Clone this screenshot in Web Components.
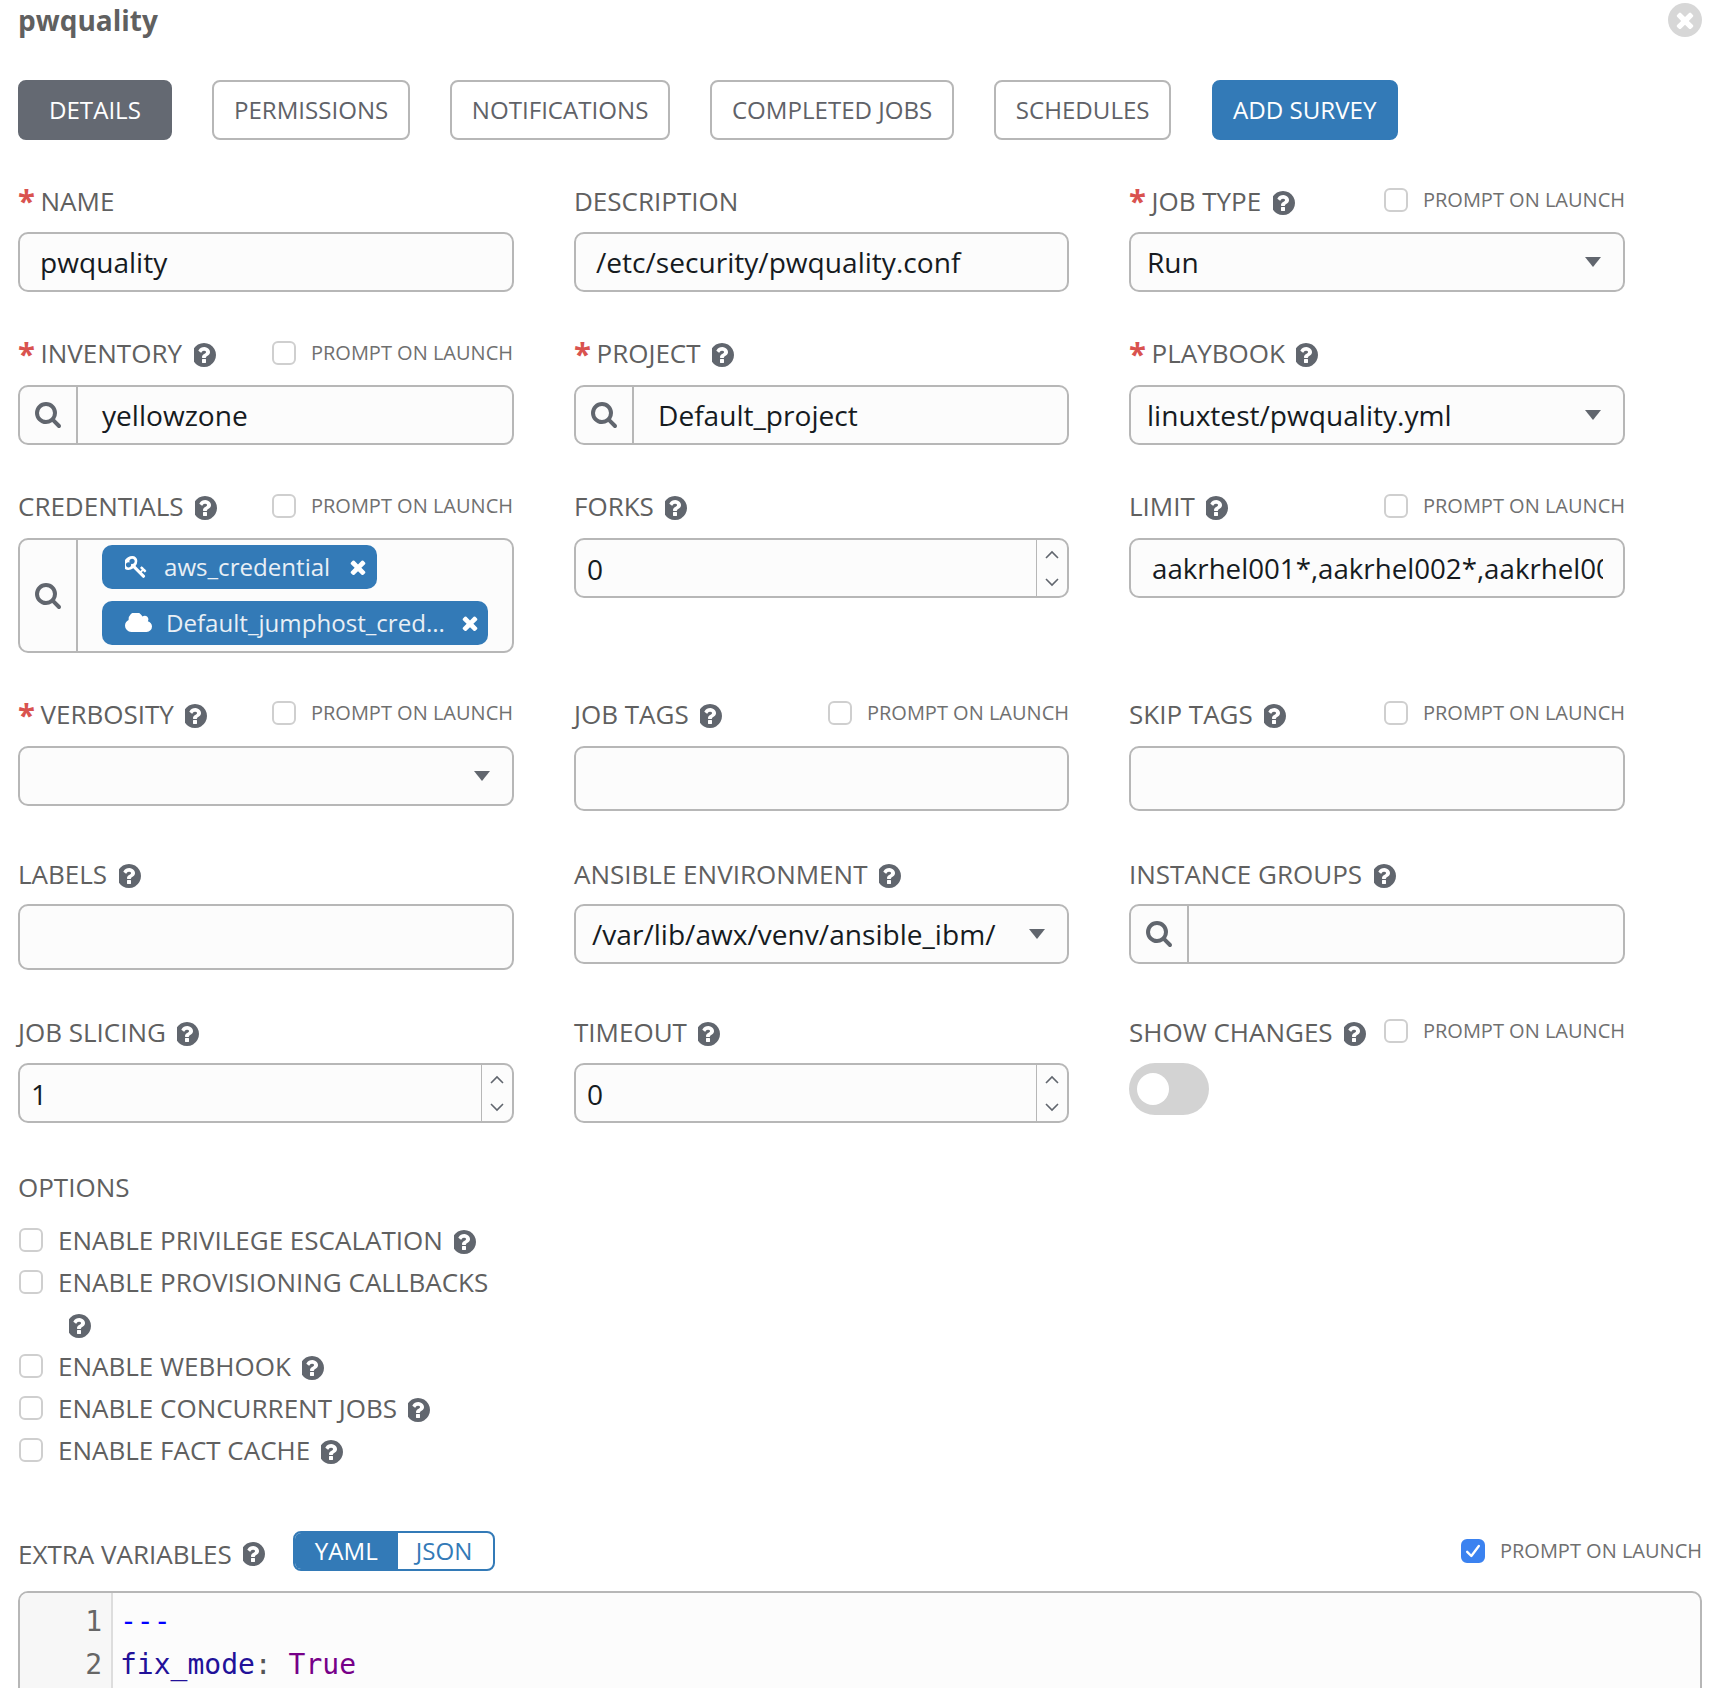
<!DOCTYPE html>
<html>
<head>
<meta charset="utf-8">
<title>pwquality</title>
<style>
    html, body {
      margin: 0;
      height: 1688px;
      overflow: hidden;
      background: #fff;
      font-family: "Open Sans", sans-serif;
    }
</style>
</head>
<body>
<template-page>
    <x-close></x-close>
    <x-title>pwquality</x-title>
    <x-tabs>
        <x-tab active style="--pad:29px">DETAILS</x-tab>
        <x-tab>PERMISSIONS</x-tab>
        <x-tab>NOTIFICATIONS</x-tab>
        <x-tab>COMPLETED JOBS</x-tab>
        <x-tab>SCHEDULES</x-tab>
        <x-tab primary>ADD SURVEY</x-tab>
    </x-tabs>
    <x-form>
        <x-field required label="NAME"><x-input>pwquality</x-input></x-field>
        <x-field label="DESCRIPTION"><x-input>/etc/security/pwquality.conf</x-input></x-field>
        <x-field required help prompt label="JOB TYPE"><x-select>Run</x-select></x-field>

        <x-field required help prompt label="INVENTORY" style="--lh:36px;--pr:1px"><x-lookup>yellowzone</x-lookup></x-field>
        <x-field required help label="PROJECT" style="--lh:36px"><x-lookup>Default_project</x-lookup></x-field>
        <x-field required help label="PLAYBOOK" style="--lh:36px"><x-select>linuxtest/pwquality.yml</x-select></x-field>

        <x-field help prompt label="CREDENTIALS" style="--lh:36px;--ph:35px;--pr:1px">
            <x-lookup tall>
                <x-tag icon="key" style="--gap:17px;--mid:20px;--end:11px">aws_credential</x-tag>
                <x-tag icon="cloud" style="--gap:14px;--mid:17px;--end:10px">Default_jumphost_cred...</x-tag>
            </x-lookup>
        </x-field>
        <x-field help label="FORKS" style="--lh:36px"><x-number>0</x-number></x-field>
        <x-field help prompt label="LIMIT" style="--lh:36px;--ph:35px"><x-input style="--pl:21px;--fs:27.7px">aakrhel001*,aakrhel002*,aakrhel003*</x-input></x-field>

        <x-field required help prompt label="VERBOSITY" style="--lh:36px;--ph:34px;--pr:1px"><x-select></x-select></x-field>
        <x-field help prompt label="JOB TAGS" style="--lh:36px;--ph:34px"><x-input style="--h:65px"></x-input></x-field>
        <x-field help prompt label="SKIP TAGS" style="--lh:36px;--ph:34px"><x-input style="--h:65px"></x-input></x-field>

        <x-field help label="LABELS" style="--lh:40px"><x-input style="--h:66px"></x-input></x-field>
        <x-field help label="ANSIBLE ENVIRONMENT" style="--lh:40px"><x-select>/var/lib/awx/venv/ansible_ibm/</x-select></x-field>
        <x-field help label="INSTANCE GROUPS" style="--lh:40px"><x-lookup></x-lookup></x-field>

        <x-field help label="JOB SLICING"><x-number>1</x-number></x-field>
        <x-field help label="TIMEOUT"><x-number>0</x-number></x-field>
        <x-field help prompt label="SHOW CHANGES" style="--ph:35px"><x-switch></x-switch></x-field>
    </x-form>
    <x-options>
        <x-option>ENABLE PRIVILEGE ESCALATION</x-option>
        <x-option>ENABLE PROVISIONING CALLBACKS</x-option>
        <x-option>ENABLE WEBHOOK</x-option>
        <x-option>ENABLE CONCURRENT JOBS</x-option>
        <x-option>ENABLE FACT CACHE</x-option>
    </x-options>
    <x-extra-vars></x-extra-vars>
</template-page>

<script>
const FONT = `"Open Sans", sans-serif`;
const ICONS = {
    help: `<svg viewBox="128 128 1536 1536" width="24" height="24" fill="#61666e"><path d="M896 1376v-192q0-14-9-23t-23-9h-192q-14 0-23 9t-9 23v192q0 14 9 23t23 9h192q14 0 23-9t9-23zm256-672q0-88-55.5-163t-138.5-116-170-41q-243 0-371 213-15 24 8 42l132 100q7 6 19 6 16 0 25-12 53-68 86-92 34-24 86-24 48 0 85.5 26t37.5 59q0 38-20 61t-68 45q-63 28-115.5 86.5t-52.5 125.5v36q0 14 9 23t23 9h192q14 0 23-9t9-23q0-19 21.5-49.5t54.5-49.5q32-18 49-28.5t46-35 44.5-48 28-60.5 12.5-81zm384 192q0 209-103 385.5t-279.5 279.5-385.5 103-385.5-103-279.5-279.5-103-385.5 103-385.5 279.5-279.5 385.5-103 385.5 103 279.5 279.5 103 385.5z"/></svg>`,
    search: `<svg viewBox="64 128 1664 1664" width="26" height="26" fill="#61666e"><path d="M1216 832q0-185-131.5-316.5t-316.5-131.5-316.5 131.5-131.5 316.5 131.5 316.5 316.5 131.5 316.5-131.5 131.5-316.5zm512 832q0 52-38 90t-90 38q-54 0-90-38l-343-342q-179 124-399 124-143 0-273.5-55.5t-225-150-150-225-55.5-273.5 55.5-273.5 150-225 225-150 273.5-55.5 273.5 55.5 225 150 150 225 55.5 273.5q0 220-124 399l343 343q37 37 37 90z"/></svg>`,
    times: `<svg viewBox="250 250 1290 1290" width="16" height="16" fill="#fff"><path d="M1490 1322q0 40-28 68l-136 136q-28 28-68 28t-68-28l-294-294-294 294q-28 28-68 28t-68-28l-136-136q-28-28-28-68t28-68l294-294-294-294q-28-28-28-68t28-68l136-136q28-28 68-28t68 28l294 294 294-294q28-28 68-28t68 28l136 136q28 28 28 68t-28 68l-294 294 294 294q28 28 28 68z"/></svg>`,
    key: `<svg viewBox="128 128 1600 1600" width="22" height="22" fill="#fff"><path d="M832 512q0-80-56-136t-136-56-136 56-56 136q0 42 19 83-41-19-83-19-80 0-136 56t-56 136 56 136 136 56 136-56 56-136q0-42-19-83 41 19 83 19 80 0 136-56t56-136zm851 704q0 17-49 66t-66 49q-9 0-28.5-16t-36.5-33-38.5-40-24.5-26l-96 96 220 220q28 28 28 68 0 42-39 81t-81 39q-40 0-68-28l-671-671q-176 131-365 131-163 0-265.5-102.5t-102.5-265.5q0-160 95-313t248-248 313-95q163 0 265.5 102.5t102.5 265.5q0 189-131 365l355 355 96-96q-2-2-26-24.5t-40-38.5-33-36.5-16-28.5q0-17 49-66t66-49q13 0 23 10 6 6 46 44.5t82 79.5 86.5 86 73 78 28.5 41z"/></svg>`,
    cloud: `<svg viewBox="0 256 1920 1344" width="27" height="19" fill="#fff"><path d="M1728 1216q0 159-112.5 271.5t-271.5 112.5h-1088q-185 0-316.5-131.5t-131.5-316.5q0-132 71-241.5t187-163.5q-2-28-2-43 0-212 150-362t362-150q158 0 286.5 88t187.5 230q70-62 166-62 106 0 181 75t75 181q0 75-41 138 129 30 213 134.5t84 239.5z" transform="translate(192 0)"/></svg>`
};

function defineElement(tag, html, extra) {
    let template = document.createElement('template');
    template.innerHTML = html;
    class Element extends HTMLElement {
        connectedCallback() {
            if (this.shadowRoot) return;
            this.attachShadow({mode: "open"});
            this.shadowRoot.appendChild(template.content.cloneNode(true));
            if (extra) extra(this, this.shadowRoot);
        }
    }
    window.customElements.define(tag, Element);
}

defineElement('template-page', `
    <style>
    :host { display: block; position: relative; padding: 0 8px 0 18px; width: 1684px; color: #606060; font-family: ${FONT}; }
    </style>
    <slot></slot>
`);

defineElement('x-close', `
    <style>
    :host { position: absolute; top: 3px; right: 8px; width: 34px; height: 34px; border-radius: 50%; background: #d7d7d7; display: flex; align-items: center; justify-content: center; }
    svg { display: block; }
    </style>
    <svg viewBox="250 250 1290 1290" width="18" height="18" fill="#fff"><path d="M1490 1322q0 40-28 68l-136 136q-28 28-68 28t-68-28l-294-294-294 294q-28 28-68 28t-68-28l-136-136q-28-28-28-68t28-68l294-294-294-294q-28-28-28-68t28-68l136-136q28-28 68-28t68 28l294 294 294-294q28-28 68-28t68 28l136 136q28 28 28 68t-28 68l-294 294 294 294q28 28 28 68z"/></svg>
`);

defineElement('x-title', `
    <style>
    :host { display: block; height: 40px; line-height: 40px; font-size: 28px; font-weight: 700; color: #606060; }
    </style>
    <slot></slot>
`);

defineElement('x-tabs', `
    <style>
    :host { display: flex; gap: 40.5px; margin-top: 40px; }
    </style>
    <slot></slot>
`);

defineElement('x-tab', `
    <style>
    :host {
      display: flex;
      align-items: center;
      box-sizing: border-box;
      height: 60px;
      padding: 0 var(--pad, 19.5px) 2px;
      border: 2px solid #b7b7b7;
      border-radius: 8px;
      font-size: 24.1px;
      color: #5f6268;
    }
    :host([active]) { background: #646972; border-color: #646972; color: #fff; }
    :host([primary]) { background: #337ab7; border-color: #337ab7; color: #fff; }
    </style>
    <slot></slot>
`);

defineElement('x-form', `
    <style>
    :host {
      display: grid;
      grid-template-columns: 496px 495px 496px;
      column-gap: 60px;
      row-gap: 43px;
      align-items: start;
      margin-top: 42px;
      width: 1607px;
    }
    </style>
    <slot></slot>
`);

defineElement('x-help', `
    <style>
    :host { display: inline-flex; vertical-align: -4px; margin-left: 11.5px; }
    svg { display: block; }
    </style>
    ${ICONS.help}
`);

defineElement('x-prompt', `
    <style>
    :host { display: inline-flex; align-items: center; gap: 15px; font-size: 20px; color: #707070; white-space: nowrap; line-height: 24px; }
    span {
      box-sizing: border-box;
      width: 24px;
      height: 24px;
      border: 2px solid #cfcfcf;
      border-radius: 6px;
      background: #fff;
      display: flex;
      align-items: center;
      justify-content: center;
    }
    :host([checked]) span { background: #3b82f0; border-color: #3b82f0; }
    svg { display: none; }
    :host([checked]) svg { display: block; }
    </style>
    <span><svg viewBox="0 0 24 24" width="20" height="20" fill="none" stroke="#fff" stroke-width="2.8" stroke-linecap="round" stroke-linejoin="round"><path d="M5 13l5 5 9-12"/></svg></span>PROMPT ON LAUNCH
`);

defineElement('x-field', `
    <style>
    :host { display: block; min-width: 0; }
    .head { display: flex; justify-content: space-between; height: 50px; }
    .label { font-size: 26px; line-height: var(--lh, 38px); color: #606060; white-space: nowrap; }
    .star { display: none; width: 22.5px; color: #d9534f; font-weight: 700; font-size: 31px; line-height: 36px; vertical-align: top; }
    :host([required]) .star { display: inline-block; }
    x-help { display: none; }
    :host([help]) x-help { display: inline-flex; }
    x-prompt { display: none; height: var(--ph, 36px); margin-right: var(--pr, 0); }
    :host([prompt]) x-prompt { display: inline-flex; }
    </style>
    <div class="head">
        <div class="label"><span class="star">*</span><span class="text"></span><x-help></x-help></div>
        <x-prompt></x-prompt>
    </div>
    <slot></slot>
`, (el, root) => {
    root.querySelector(".text").textContent = el.getAttribute("label");
});

defineElement('x-input', `
    <style>
    :host {
      display: block;
      box-sizing: border-box;
      height: var(--h, 60px);
      padding: 0 20px 0 var(--pl, 20px);
      border: 2px solid #b7b7b7;
      border-radius: 10px;
      background: #fcfcfc;
      color: #161b1f;
      font-size: var(--fs, 28.1px);
      line-height: 56px;
    }
    div { overflow: hidden; white-space: nowrap; }
    </style>
    <div><slot></slot></div>
`);

defineElement('x-select', `
    <style>
    :host {
      display: flex;
      align-items: center;
      justify-content: space-between;
      box-sizing: border-box;
      height: 60px;
      padding: 0 22px 0 16px;
      border: 2px solid #b7b7b7;
      border-radius: 10px;
      background: #fcfcfc;
      color: #161b1f;
      font-size: 28.1px;
      white-space: nowrap;
    }
    i { width: 0; height: 0; border: 8px solid transparent; border-top: 10px solid #61666e; border-bottom: 0; }
    </style>
    <span><slot></slot></span><i></i>
`);

defineElement('x-lookup', `
    <style>
    :host {
      display: flex;
      box-sizing: border-box;
      min-height: 60px;
      border: 2px solid #b7b7b7;
      border-radius: 10px;
      background: #fcfcfc;
      color: #161b1f;
      font-size: 28.1px;
    }
    :host([tall]) { height: 115px; }
    .btn { flex: none; width: 56px; border-right: 2px solid #b7b7b7; display: flex; align-items: center; justify-content: center; }
    .value { flex: 1; display: flex; flex-direction: column; align-items: flex-start; justify-content: center; gap: 12px; padding: 0 24px; white-space: nowrap; }
    :host([tall]) .value { padding-bottom: 2px; }
    </style>
    <div class="btn">${ICONS.search}</div>
    <div class="value"><slot></slot></div>
`);

defineElement('x-tag', `
    <style>
    :host {
      display: inline-flex;
      align-items: center;
      box-sizing: border-box;
      height: 44px;
      padding: 0 var(--end, 16px) 0 23px;
      border-radius: 10px;
      background: #337ab7;
      color: #e9eff5;
      font-size: 24.1px;
      white-space: nowrap;
    }
    .icon { display: flex; margin-right: var(--gap, 14px); }
    .close { display: flex; margin-left: var(--mid, 22px); }
    </style>
    <span class="icon"></span><slot></slot><span class="close">${ICONS.times}</span>
`, (el, root) => {
    root.querySelector(".icon").innerHTML = ICONS[el.getAttribute("icon")];
});

defineElement('x-number', `
    <style>
    :host {
      display: flex;
      box-sizing: border-box;
      height: 60px;
      border: 2px solid #b7b7b7;
      border-radius: 10px;
      background: #fcfcfc;
      color: #161b1f;
      font-size: 28.1px;
    }
    .value { flex: 1; padding-left: 11px; line-height: 58px; }
    .spin { flex: none; width: 31px; border-left: 1px solid #b7b7b7; display: flex; flex-direction: column; align-items: center; justify-content: space-between; padding: 10px 0 9px; box-sizing: border-box; }
    svg { display: block; }
    </style>
    <div class="value"><slot></slot></div>
    <div class="spin">
        <svg width="16" height="10" viewBox="0 0 16 10" fill="none" stroke="#61666e" stroke-width="1.6"><path d="M2 8l6-6 6 6"/></svg>
        <svg width="16" height="10" viewBox="0 0 16 10" fill="none" stroke="#61666e" stroke-width="1.6"><path d="M2 2l6 6 6-6"/></svg>
    </div>
`);

defineElement('x-switch', `
    <style>
    :host { display: flex; align-items: center; box-sizing: border-box; width: 80px; height: 52px; padding-left: 8px; border-radius: 26px; background: #d3d3d3; }
    i { width: 32px; height: 32px; border-radius: 50%; background: #fff; }
    </style>
    <i></i>
`);

defineElement('x-options', `
    <style>
    :host { display: block; margin-top: 44px; width: 495px; }
    .title { font-size: 26px; line-height: 40px; margin-bottom: 11.5px; color: #606060; }
    </style>
    <div class="title">OPTIONS</div>
    <slot></slot>
`);

defineElement('x-option', `
    <style>
    :host { display: block; position: relative; padding-left: 40px; font-size: 26px; line-height: 42px; color: #606060; }
    span {
      position: absolute;
      left: 1px;
      top: 9px;
      box-sizing: border-box;
      width: 24px;
      height: 24px;
      border: 2px solid #cfcfcf;
      border-radius: 6px;
      background: #fff;
    }
    x-help { margin-left: 11px; }
    </style>
    <span></span><slot></slot><x-help></x-help>
`);

defineElement('x-extra-vars', `
    <style>
    :host { display: block; margin-top: 60px; }
    .head { display: flex; align-items: center; height: 40px; }
    .label { font-size: 26px; padding-top: 6px; color: #606060; white-space: nowrap; }
    x-help { margin-top: 6px; margin-left: 11px; }
    .toggle { display: flex; box-sizing: border-box; height: 40px; margin-left: 26px; border: 2px solid #337ab7; border-radius: 8px; overflow: hidden; font-size: 24.1px; line-height: 36px; color: #337ab7; background: #fff; }
    .toggle span { padding: 0 21px 0 18px; }
    .toggle .on { background: #337ab7; color: #fff; padding: 0 20px; }
    x-prompt { margin-left: auto; }
    .editor {
      box-sizing: border-box;
      height: 200px;
      margin-top: 20px;
      display: flex;
      border: 2px solid #b7b7b7;
      border-radius: 10px 10px 0 0;
      background: #fcfcfc;
      font-family: "DejaVu Sans Mono", monospace;
      font-size: 28px;
      line-height: 42.5px;
    }
    .gutter { box-sizing: border-box; width: 93px; padding: 8.5px 9px 0 0; text-align: right; background: #f7f7f7; border-right: 2px solid #dddddd; color: #666; border-radius: 8px 0 0 0; }
    .code { padding: 8.5px 0 0 7px; white-space: pre; }
    .dash { color: #00f; }
    .key { color: #219; }
    .punct { color: #555; }
    .val { color: #708; }
    </style>
    <div class="head">
        <span class="label">EXTRA VARIABLES</span><x-help></x-help>
        <div class="toggle"><span class="on">YAML</span><span>JSON</span></div>
        <x-prompt checked></x-prompt>
    </div>
    <div class="editor">
        <div class="gutter">1<br>2</div>
        <div class="code"><span class="dash">---</span>
<span class="key">fix_mode</span><span class="punct">:</span> <span class="val">True</span></div>
    </div>
`);
</script>
</body>
</html>
